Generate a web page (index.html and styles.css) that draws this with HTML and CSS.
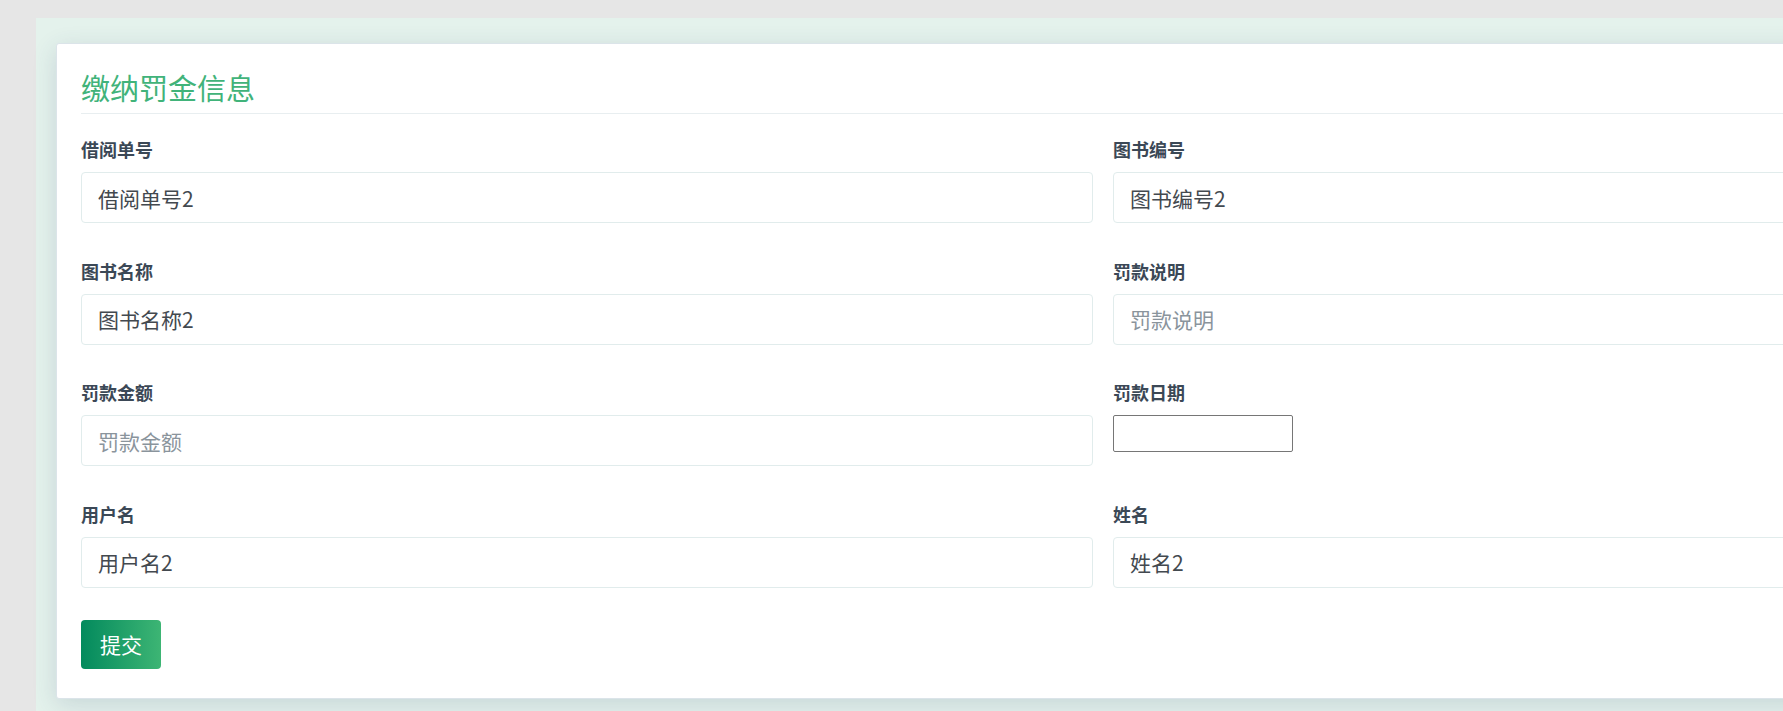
FILE: index.html
```html
<!DOCTYPE html>
<html lang="zh-CN">
<head>
    <meta charset="UTF-8">
    <meta name="viewport" content="width=device-width, initial-scale=1.0">
    <title>缴纳罚金信息</title>
    <link rel="stylesheet" href="styles.css">
</head>
<body>
    <div class="page">
        <div class="panel">
            <h2 class="panel-title">缴纳罚金信息</h2>
            <form class="fine-form">
                <div class="form-grid">
                    <div class="form-group">
                        <label>借阅单号</label>
                        <input type="text" class="form-control" value="借阅单号2">
                    </div>
                    <div class="form-group">
                        <label>图书编号</label>
                        <input type="text" class="form-control" value="图书编号2">
                    </div>
                    <div class="form-group">
                        <label>图书名称</label>
                        <input type="text" class="form-control" value="图书名称2">
                    </div>
                    <div class="form-group">
                        <label>罚款说明</label>
                        <input type="text" class="form-control" placeholder="罚款说明">
                    </div>
                    <div class="form-group">
                        <label>罚款金额</label>
                        <input type="text" class="form-control" placeholder="罚款金额">
                    </div>
                    <div class="form-group">
                        <label>罚款日期</label>
                        <input type="text" class="date-input">
                    </div>
                    <div class="form-group">
                        <label>用户名</label>
                        <input type="text" class="form-control" value="用户名2">
                    </div>
                    <div class="form-group">
                        <label>姓名</label>
                        <input type="text" class="form-control" value="姓名2">
                    </div>
                </div>
                <button type="button" class="btn-submit">提交</button>
            </form>
        </div>
    </div>
</body>
</html>
```

FILE: styles.css
```css
*{
    margin: 0;
    padding: 0;
    box-sizing: border-box;
    font-family: "Noto Sans CJK SC", "Noto Sans", sans-serif;
}
html, body{
    overflow: hidden;
}
body{
    min-height: 100vh;
    background: #e6e6e6;
    padding: 18px 0 0 36px;
}
.page{
    width: 2134px;
    min-height: 720px;
    padding: 25px 20px 20px;
    background: #e4f2ec;
}
.panel{
    width: 2094px;
    padding: 23px 24px 29px;
    background: #fff;
    border: 1px solid #dbe4e9;
    border-radius: 3px;
    box-shadow: 0 6px 24px rgba(50, 70, 110, 0.16);
}
.panel-title{
    font-size: 29px;
    font-weight: normal;
    line-height: 40px;
    color: #41b37a;
    padding-bottom: 6px;
    border-bottom: 1px solid #e8eef0;
}
.fine-form{
    margin-top: 23px;
}
.form-grid{
    display: grid;
    grid-template-columns: 1fr 1fr;
    column-gap: 20px;
    row-gap: 35.5px;
}
.form-group label{
    display: block;
    font-size: 18px;
    font-weight: bold;
    line-height: 24px;
    margin-bottom: 11px;
    color: #3b4856;
}
.form-control{
    display: block;
    width: 100%;
    height: 51px;
    padding: 0 16px;
    font-size: 21px;
    color: #43494f;
    border: 1px solid #e1ecec;
    border-radius: 4px;
    outline: none;
}
.form-control::placeholder{
    color: #8a949c;
}
.date-input{
    display: block;
    width: 180px;
    height: 37px;
    border: 1px solid #767676;
    border-radius: 2px;
    outline: none;
    font-size: 16px;
}
.btn-submit{
    margin-top: 32px;
    height: 49px;
    padding: 0 19px;
    font-size: 21px;
    color: #fff;
    border: none;
    border-radius: 4px;
    background: linear-gradient(to right, #038a5d, #3db574);
    cursor: pointer;
}
```
